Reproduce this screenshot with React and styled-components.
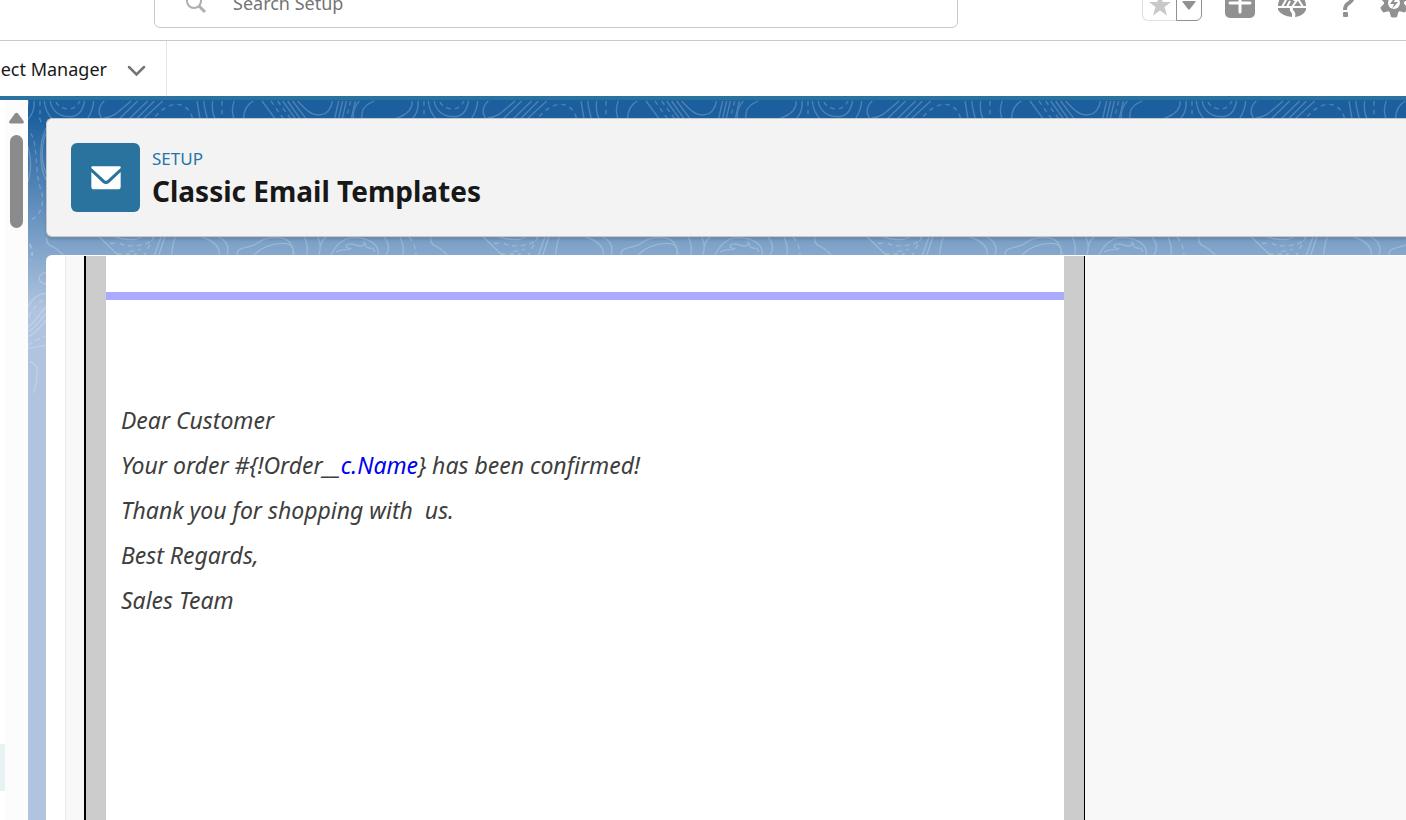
import React from "react";
import styled, { createGlobalStyle } from "styled-components";

const GlobalStyle = createGlobalStyle`
  *, *::before, *::after { box-sizing: border-box; }
  html, body, #root { height: 100%; }
  body {
    margin: 0;
    overflow: hidden;
    background: #fff;
    color: #181818;
    font-family: "Noto Sans", "Open Sans", sans-serif;
    font-size: 18px;
  }
  button { font: inherit; color: inherit; padding: 0; border: 0; background: none; cursor: pointer; }
`;

const Page = styled.div`
  display: flex;
  flex-direction: column;
  min-height: 100vh;
`;

const TopBar = styled.header`
  display: flex;
  align-items: flex-end;
  height: 41px;
  padding-left: 154px;
  overflow: hidden;
  border-bottom: 1px solid #c9c9c9;
`;

const SearchBox = styled.label`
  display: flex;
  align-items: center;
  flex: 0 1 804px;
  height: 50px;
  margin-bottom: 12px;
  padding-left: 30px;
  gap: 26px;
  border: 1px solid #c9c9c9;
  border-radius: 6px;
`;

const SearchInput = styled.input`
  flex: 1;
  min-width: 0;
  height: 40px;
  padding: 0;
  border: 0;
  outline: 0;
  background: none;
  font: inherit;
  color: #181818;
  &::placeholder { color: #747474; opacity: 1; }
`;

const Actions = styled.div`
  display: flex;
  align-items: flex-end;
  gap: 23px;
  margin: 0 -3px 19px auto;
`;

const Favorites = styled.div`
  display: flex;
`;

const FavoriteButton = styled.button`
  display: flex;
  align-items: center;
  justify-content: center;
  width: ${(p) => (p.$menu ? 26 : 34)}px;
  height: 32px;
  border: 1px solid ${(p) => (p.$menu ? "#919191" : "#e0e0e0")};
  border-right-width: ${(p) => (p.$menu ? 1 : 0)}px;
  border-radius: ${(p) => (p.$menu ? "0 6px 6px 0" : "6px 0 0 6px")};
`;

const IconButton = styled.button`
  display: flex;
  align-items: flex-end;
  height: 30px;
  margin-bottom: 3px;
`;

const NavBar = styled.nav`
  display: flex;
  height: 59px;
  flex: none;
  border-bottom: 4px solid #2a739e;
`;

const NavTab = styled.div`
  display: flex;
  align-items: center;
  justify-content: flex-end;
  gap: 20px;
  width: 167px;
  padding: 0 20px 0 0;
  border-right: 1px solid #e5e5e5;
`;

const NavLink = styled.a`
  flex: none;
  line-height: 24px;
  color: #181818;
  text-decoration: none;
`;

const Chevron = styled.button`
  display: flex;
  padding-top: 4px;
`;

const Body = styled.div`
  display: flex;
  flex: 1;
`;

const Sidebar = styled.aside`
  display: flex;
  flex: none;
  width: 28px;
`;

const TreeEdge = styled.div`
  width: 5px;
  padding-top: 644px;
`;

const SelectedItem = styled.div`
  height: 47px;
  background: #e8f1f4;
`;

const ScrollTrack = styled.div`
  display: flex;
  flex-direction: column;
  align-items: center;
  flex: 1;
  gap: 11px;
  padding-top: 12px;
  background: #fcfcfc;
`;

const ScrollThumb = styled.div`
  width: 13px;
  height: 93px;
  border-radius: 7px;
  background: #8b8b8b;
`;

const Workspace = styled.main`
  position: relative;
  display: flex;
  flex-direction: column;
  flex: 1;
  min-width: 0;
  gap: 18px;
  padding: 18px 0 0 18px;
  background: linear-gradient(#1b5f9e 15px, #b0c4df 210px);
`;

const Contours = styled.svg`
  position: absolute;
  top: 0;
  left: 0;
  width: 100%;
  height: 300px;
`;

const HeaderCard = styled.section`
  position: relative;
  display: flex;
  align-items: flex-start;
  gap: 12px;
  height: 119px;
  padding: 24px;
  border: 1px solid #c9c9c9;
  border-right: 0;
  border-radius: 6px 0 0 6px;
  background: #f3f3f3;
  box-shadow: 0 3px 3px rgba(0, 0, 0, 0.12);
`;

const IconTile = styled.div`
  display: flex;
  align-items: center;
  justify-content: center;
  width: 69px;
  height: 69px;
  border-radius: 6px;
  background: #2a739e;
`;

const Overline = styled.p`
  margin: 3px 0 0;
  font-size: 17px;
  line-height: 25px;
  color: #2574a9;
`;

const Title = styled.h1`
  margin: 0;
  font-size: 28px;
  line-height: 40px;
  font-weight: 700;
`;

const Frame = styled.section`
  position: relative;
  display: flex;
  flex: 1;
  padding: 1px 0 0 19px;
  border-radius: 6px 0 0 0;
  background: #fff;
`;

const FrameContent = styled.div`
  display: flex;
  flex: 1;
  min-width: 0;
  padding-left: 18px;
  border-left: 1px solid #e9e9e9;
  background: #f8f8f8;
`;

const Letterhead = styled.div`
  display: flex;
  flex: 0 1 1001px;
  padding: 0 20px;
  border: solid #000;
  border-width: 0 1px 0 2px;
  background: #ccc;
`;

const Letter = styled.article`
  flex: 1;
  padding-top: 36px;
  background: #fff;
`;

const Rule = styled.hr`
  height: 8px;
  margin: 0;
  border: 0;
  background: #aaaaff;
`;

const Message = styled.div`
  padding: 98px 15px 0;
  font-size: 23px;
  line-height: 45px;
  font-style: italic;
  color: #3e3e3c;
  p { margin: 0; }
`;

const MergeLink = styled.a`
  color: #0000ee;
  text-decoration: none;
`;

const solidTile = [
  "M37 33C37 60 20 75-10 84", "M1189 33C1189 60 1172 75 1142 84",
  "M55 33C55 62 48 75 34 90", "M85 33C87 60 95 75 112 90",
  "M103 33C105 60 130 80 160 80C190 80 200 60 206 33",
  "M233 33C232 50 225 70 215 86", "M265 33C245 50 245 75 262 90",
  "M262 84C290 84 305 68 345 33",
  "M310 86L365 33", "M340 86L395 33", "M362 86L415 33", "M382 86L440 33",
  "M543 33L552 86", "M563 33C565 55 570 70 574 86", "M590 33C586 60 592 75 597 86",
  "M655 33C648 50 648 70 654 86", "M712 33C690 45 683 65 683 86",
  "M738 33L777 86", "M800 33L838 86", "M815 33L852 86", "M830 33L870 86",
  "M845 33C870 60 885 75 910 75C940 72 945 50 950 33",
  "M968 33L956 86", "M980 33L968 86", "M991 33L979 86", "M1018 33L1006 86",
  "M1030 33C1015 50 1010 70 1012 86", "M1075 33C1045 45 1035 60 1038 86",
  "M92 441C90 455 95 465 110 470C125 477 130 485 142 496",
  "M250 441L307 496", "M297 441C340 454 365 448 378 441",
  "M435 441L415 496", "M447 441L428 496", "M478 441C470 460 468 480 467 496",
  "M558 441C600 455 612 475 610 496", "M608 441C635 455 640 475 633 496",
  "M664 496C658 470 700 474 720 462C745 445 755 443 780 443C820 441 832 465 834 496",
  "M715 496C730 475 770 460 800 460C830 460 834 475 830 496",
  "M865 441C875 460 875 480 872 496", "M905 441C918 465 912 480 908 496",
  "M930 441C920 450 915 460 913 470",
  "M945 496C960 460 990 441 1015 443C1065 445 1090 465 1087 496",
  "M960 487C975 475 995 482 1003 476C985 474 985 460 1010 462C1022 465 1030 472 1042 466L1045 457L1052 473L1072 476L1076 486",
  "M1105 441C1120 460 1120 480 1110 496", "M1152 441C1160 460 1165 480 1160 496", "M0 441C8 460 13 480 8 496",
];

const dashedTile = [
  "M72 33V86", "M120 36C130 62 185 66 190 33", "M418 80C450 40 510 20 530 86", "M618 33V86",
  "M765 33L802 86", "M785 33L824 86", "M1004 33L991 86",
  "M282 460H300", "M312 460C330 472 380 470 402 455", "M302 492H362", "M340 484L375 478",
  "M413 441L385 496", "M28 441C43 460 48 480 48 496",
];

const solidEdge = [
  "M84 440C95 480 92 520 84 545", "M138 385C116 430 118 500 138 540", "M138 400C122 440 124 490 138 520",
  "M138 818C110 820 112 850 138 852", "M84 920C100 890 120 880 138 880",
  "M84 980C105 970 120 935 138 922", "M84 995C110 980 125 955 138 940", "M84 1010C110 1000 125 975 138 960",
  "M84 1045L138 1036", "M90 1085C110 1095 115 1100 110 1130C109 1155 106 1170 98 1178",
];

const dashedEdge = [
  "M118 354L126 372", "M92 400C114 430 104 510 120 560C132 590 130 620 116 640C104 655 94 660 84 662",
  "M88 730C100 750 98 770 90 782", "M86 950C100 920 120 902 138 898", "M84 1035C100 1025 120 1015 138 1008",
];

function ContourBackground() {
  return (
    <Contours aria-hidden="true" fill="none" stroke="#fff" strokeWidth="4">
      <defs>
        <pattern id="contours" x="-12" y="0" width="384" height="300" patternUnits="userSpaceOnUse">
          <g transform="scale(.33333) translate(0 -30)" opacity=".22">
            {solidTile.map((d) => <path key={d} d={d} />)}
            {dashedTile.map((d) => <path key={d} d={d} strokeDasharray="14 12" />)}
          </g>
        </pattern>
      </defs>
      <rect width="100%" height="300" fill="url(#contours)" stroke="none" />
      <g transform="scale(.33333) translate(-84 -300)" opacity=".22">
        {solidEdge.map((d) => <path key={d} d={d} />)}
        {dashedEdge.map((d) => <path key={d} d={d} strokeDasharray="14 12" />)}
      </g>
    </Contours>
  );
}

function Header() {
  return (
    <TopBar>
      <SearchBox>
        <svg width="22" height="22" viewBox="0 0 22 22" fill="none" stroke="#aeaeae" strokeWidth="2">
          <circle cx="9" cy="9" r="7" />
          <path d="M14 14L20 20" strokeWidth="3" />
        </svg>
        <SearchInput type="search" placeholder="Search Setup" aria-label="Search Setup" />
      </SearchBox>
      <Actions>
        <Favorites>
          <FavoriteButton aria-label="Add favorite">
            <svg width="24" height="24" viewBox="0 0 24 24" fill="#c9c9c9">
              <path d="M12 1L14.8 9H23L16.5 14L19 22.5L12 17.5L5 22.5L7.500 14L1 9H9.200Z" />
            </svg>
          </FavoriteButton>
          <FavoriteButton $menu aria-label="Favorites list">
            <svg width="14" height="9" viewBox="0 0 14 9" fill="#919191">
              <path d="M1 0H13Q14 0 13.500 1L8 8Q7 9 6 8L.5 1Q0 0 1 0Z" />
            </svg>
          </FavoriteButton>
        </Favorites>
        <IconButton aria-label="Global actions">
          <svg width="30" height="30" viewBox="0 0 30 30">
            <rect width="30" height="30" rx="5" fill="#919191" />
            <path d="M15 5V24M5 15H25" stroke="#fff" strokeWidth="3" strokeLinecap="round" />
          </svg>
        </IconButton>
        <IconButton aria-label="Guidance center">
          <svg width="28" height="30" viewBox="0 0 28 30">
            <path d="M0 18A14 14 0 1 1 28 18Z" fill="#919191" />
            <path d="M4 19L12 5L17 13M14 19L20 11L25 19M9 19L12 13" fill="none" stroke="#fff" strokeWidth="2" />
            <path d="M0 20H12Q11 22 13 24Q15 26 14 29Q4 28 0 22ZM15 20H28V22Q25 28 17 29Q18 25 16 23Q14 22 15 20Z" fill="#919191" />
          </svg>
        </IconButton>
        <IconButton aria-label="Help">
          <svg width="28" height="30" viewBox="0 0 28 30">
            <path d="M8 7Q9 1 16 1Q24 1 24 8Q24 12 20 15Q16 17 16 22" fill="none" stroke="#919191" strokeWidth="4" />
            <rect x="14" y="24" width="5" height="5" rx="1" fill="#919191" />
          </svg>
        </IconButton>
        <IconButton aria-label="Setup">
          <svg width="29" height="30" viewBox="0 0 29 30">
            <g fill="#919191">
              <circle cx="14" cy="15" r="10" />
              {[0, 60, 120, 180, 240, 300].map((a) => (
                <path key={a} d="M11 1Q14 0 17 1L19 8H9Z" transform={`rotate(${a} 14 15)`} />
              ))}
            </g>
            <circle cx="14" cy="15" r="6" fill="#fff" />
            <path d="M15 9L10 16H14L12 21L18 14H14L16 9Z" fill="#919191" />
          </svg>
        </IconButton>
      </Actions>
    </TopBar>
  );
}

export default function App() {
  return (
    <>
      <GlobalStyle />
      <Page>
        <Header />
        <NavBar>
          <NavTab>
            <NavLink href="#object-manager">ect Manager</NavLink>
            <Chevron aria-label="Object Manager menu">
              <svg width="19" height="12" viewBox="0 0 19 12" fill="none" stroke="#747474" strokeWidth="2.500" strokeLinecap="round">
                <path d="M2 2L9.500 9.500L17 2" />
              </svg>
            </Chevron>
          </NavTab>
        </NavBar>
        <Body>
          <Sidebar>
            <TreeEdge><SelectedItem /></TreeEdge>
            <ScrollTrack>
              <svg width="15" height="12" viewBox="0 0 15 12" fill="#8b8b8b">
                <path d="M6 1.500Q7.500 0 9 1.500L14.500 9Q15.500 11.500 13 11.500H2Q-.5 11.500 .5 9Z" />
              </svg>
              <ScrollThumb />
            </ScrollTrack>
          </Sidebar>
          <Workspace>
            <ContourBackground />
            <HeaderCard>
              <IconTile>
                <svg width="30" height="24" viewBox="274 497 90 72" fill="#fff">
                  <path d="M278 498H360Q365 499 362 504L323 540Q319 543 315 540L276 504Q273 499 278 498Z" />
                  <path d="M275 515L310 548Q319 555 328 548L363 515V559Q363 567 355 567H283Q275 567 275 559Z" />
                </svg>
              </IconTile>
              <div>
                <Overline>SETUP</Overline>
                <Title>Classic Email Templates</Title>
              </div>
            </HeaderCard>
            <Frame>
              <FrameContent>
                <Letterhead>
                  <Letter>
                    <Rule />
                    <Message>
                      <p>Dear Customer</p>
                      <p>Your order #{"{!Order__"}<MergeLink href="#c.Name">c.Name</MergeLink>{"}"} has been confirmed!</p>
                      <p>Thank you for shopping with{"\u00a0"} us.</p>
                      <p>Best Regards,</p>
                      <p>Sales Team</p>
                    </Message>
                  </Letter>
                </Letterhead>
              </FrameContent>
            </Frame>
          </Workspace>
        </Body>
      </Page>
    </>
  );
}
